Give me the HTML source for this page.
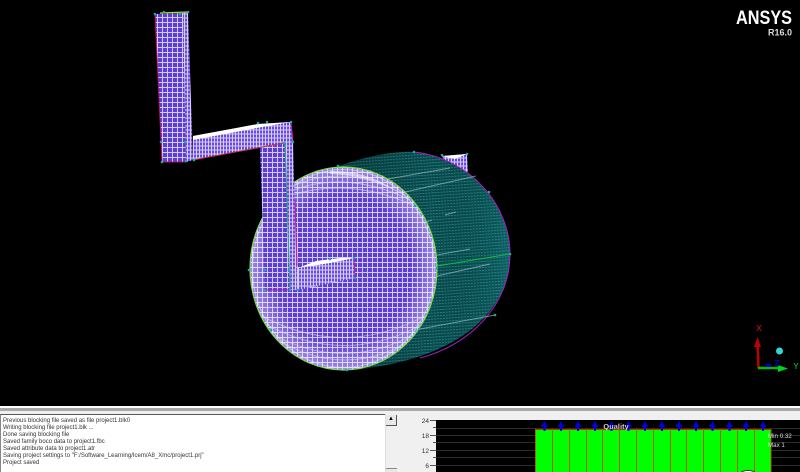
<!DOCTYPE html>
<html><head><meta charset="utf-8"><style>
html,body{margin:0;padding:0;background:#000;width:800px;height:472px;overflow:hidden}
#w{position:relative;width:800px;height:472px;overflow:hidden;font-family:"Liberation Sans",sans-serif}
.a{position:absolute}
</style></head><body><div id="w">
<svg class="a" style="left:0;top:0" width="800" height="406" viewBox="0 0 800 406">
<defs>
<pattern id="m" width="5" height="5" patternUnits="userSpaceOnUse"><rect width="5" height="5" fill="#5e3cd6"/><path d="M2.500 0V5M0 2.500H5" stroke="#d4ccf8" stroke-width="1"/></pattern>
<pattern id="n" width="3" height="4" patternUnits="userSpaceOnUse"><rect width="3" height="4" fill="#6a4adc"/><path d="M1.500 0V4M0 2H3" stroke="#d6cef8" stroke-width="1"/></pattern>
<pattern id="t" width="3" height="3" patternUnits="userSpaceOnUse" patternTransform="rotate(-4)"><rect width="3" height="3" fill="#0c4d50"/><rect width="2" height="1" fill="#1d8285"/><rect y="2" x="1" width="1" height="1" fill="#0a3436"/></pattern>
<linearGradient id="tg" x1="0" x2="1" y1="0" y2="0"><stop offset="0" stop-color="#000" stop-opacity=".25"/><stop offset=".55" stop-color="#000" stop-opacity="0"/><stop offset="1" stop-color="#2aa" stop-opacity=".22"/></linearGradient>
<radialGradient id="rim" cx=".5" cy=".5" r=".5"><stop offset=".72" stop-color="#fff" stop-opacity="0"/><stop offset=".93" stop-color="#fff" stop-opacity=".3"/><stop offset="1" stop-color="#fff" stop-opacity=".4"/></radialGradient>
<clipPath id="disc"><ellipse cx="343.500" cy="268.500" rx="93.500" ry="101.500"/></clipPath>
</defs>

<!-- back small tab -->
<polygon points="442,156 467,154 468,172 450,170" fill="url(#n)"/>
<polygon points="442,156 467,154 455,159" fill="#fff"/>

<!-- cylinder body -->
<path d="M336,167 C360,158 395,150 414,152 C470,158 510,205 510,254 C510,305 470,345 400,362 C385,366 360,370 345,370 Z" fill="url(#t)"/>
<path d="M336,167 C360,158 395,150 414,152 C470,158 510,205 510,254 C510,305 470,345 400,362 C385,366 360,370 345,370 Z" fill="url(#tg)"/>
<path d="M414,152 C470,158 510,205 510,254 C510,305 470,345 420,358" fill="none" stroke="#a020c0" stroke-width="1"/>
<g stroke="#a8cfcf" stroke-width="1" fill="none" opacity=".6">
<path d="M388,179 L450,168"/><path d="M405,192 L476,176"/><path d="M420,224 L432,220"/><path d="M445,215 L456,212"/>
<path d="M437,276 L490,264"/><path d="M420,329 L495,315"/><path d="M437,255 L470,249"/>
</g>
<path d="M437,266 L510,254" stroke="#0ec040" stroke-width="1"/>

<!-- front disc -->
<ellipse cx="343.500" cy="268.500" rx="93.500" ry="101.500" fill="url(#m)"/>
<ellipse cx="343.500" cy="268.500" rx="93.500" ry="101.500" fill="url(#rim)"/>
<!-- corner O-grid curves -->
<g clip-path="url(#disc)" fill="none" stroke="#e4def9" stroke-width="1" opacity=".55">
<path d="M285,190 Q340,160 405,195"/><path d="M280,196 Q340,166 410,200"/><path d="M275,202 Q340,172 415,206"/>
<path d="M270,335 Q345,385 420,335"/><path d="M265,330 Q345,378 425,328"/><path d="M262,322 Q345,370 430,320"/><path d="M258,314 Q345,362 432,312"/>
</g>
<ellipse cx="343.500" cy="268.500" rx="91" ry="99" fill="none" stroke="#e4def9" stroke-width="1" opacity=".6"/>
<ellipse cx="343.500" cy="268.500" rx="93.500" ry="101.500" fill="none" stroke="#7ee04a" stroke-width="1.200"/>
<path d="M330,171 Q365,170 395,190 Q368,176 330,174Z" fill="#fff" opacity=".55"/>

<!-- foot -->
<polygon points="298,268 354,258 355,278 298,290" fill="url(#n)"/>
<polygon points="298,268 316,261 340,258 354,258 330,263" fill="#fff"/>
<path d="M354,258 L355,278" stroke="#c02080" stroke-width="1"/>

<!-- down piece -->
<polygon points="260,148 283,143 293,142 295,290 265,290" fill="url(#m)"/>
<polygon points="285,143 293,142 297,290 290,290" fill="url(#n)"/>
<path d="M285,143 L290,290" stroke="#28b070" stroke-width="1"/>
<path d="M295,200 L297,266" stroke="#c02090" stroke-width="1"/>
<path d="M265,290 L290,290" stroke="#b02090" stroke-width="1"/>

<!-- left vertical -->
<polygon points="155,14 183,13 187,162 162,162" fill="url(#m)"/>
<polygon points="183,13 188,12 193,160 186,162" fill="url(#n)"/>
<path d="M155,14 L162,162" stroke="#c01060" stroke-width="1"/>
<path d="M162,162 L186,162" stroke="#c01060" stroke-width="1"/>
<path d="M160,13 L188,12" stroke="#a0e040" stroke-width="1.200"/>

<!-- horizontal arm -->
<polygon points="193,136 258,124 291,122 293,142 193,160" fill="url(#n)"/>
<polygon points="193,136 258,124 291,122 262,127 193,140" fill="#fff"/>
<path d="M193,160 L283,143" stroke="#c03040" stroke-width="1"/>
<path d="M291,122 L293,142" stroke="#c02090" stroke-width="1"/>

<!-- vertices -->
<g fill="#1fa8a8">
<circle cx="155" cy="14" r="1.300"/><circle cx="164" cy="12" r="1.300"/><circle cx="180" cy="14" r="1.300"/><circle cx="188" cy="12" r="1.300"/>
<circle cx="161" cy="142" r="1.300"/><circle cx="185" cy="142" r="1.300"/><circle cx="162" cy="162" r="1.300"/><circle cx="186" cy="161" r="1.300"/><circle cx="194" cy="160" r="1.300"/>
<circle cx="258" cy="123" r="1.300"/><circle cx="267" cy="122" r="1.300"/><circle cx="291" cy="122" r="1.300"/><circle cx="293" cy="142" r="1.300"/><circle cx="284" cy="143" r="1.300"/>
<circle cx="338" cy="166" r="1.300"/><circle cx="414" cy="152" r="1.300"/><circle cx="467" cy="154" r="1.300"/><circle cx="442" cy="155" r="1.300"/><circle cx="489" cy="192" r="1.300"/>
<circle cx="510" cy="254" r="1.300"/><circle cx="495" cy="315" r="1.300"/><circle cx="415" cy="206" r="1.300"/><circle cx="437" cy="268" r="1.300"/><circle cx="419" cy="329" r="1.300"/>
<circle cx="347" cy="370" r="1.300"/><circle cx="271" cy="330" r="1.300"/><circle cx="249" cy="270" r="1.300"/><circle cx="265" cy="290" r="1.300"/><circle cx="290" cy="290" r="1.300"/>
<circle cx="298" cy="290" r="1.300"/><circle cx="355" cy="278" r="1.300"/><circle cx="354" cy="258" r="1.300"/><circle cx="330" cy="259" r="1.300"/><circle cx="289" cy="270" r="1.300"/><circle cx="265" cy="270" r="1.300"/>
</g>

<!-- triad -->
<path d="M758.500 368 L757.500 342" stroke="#c00000" stroke-width="2.500"/>
<polygon points="754,347 761,347 757.500,337" fill="#c00000"/>
<path d="M758 368 H780" stroke="#00c000" stroke-width="2.500"/>
<polygon points="778,365 778,372 788,368.500" fill="#00d020"/>
<path d="M765 367 a3.500 3.500 0 0 1 7 0z" fill="#0000c0"/>
<circle cx="779.500" cy="351" r="3.500" fill="#30d8d0"/>
<text x="759" y="331" fill="#a01010" font-size="8" font-weight="bold" text-anchor="middle">X</text>
<text x="777" y="366" fill="#0000d0" font-size="8" font-weight="bold" text-anchor="middle">Z</text>
<text x="796" y="369" fill="#00a020" font-size="8" font-weight="bold" text-anchor="middle">Y</text>

<!-- logo -->
<text x="792" y="24" fill="#fff" font-size="19.500" font-weight="bold" text-anchor="end" textLength="56" lengthAdjust="spacingAndGlyphs">ANSYS</text>
<text x="792" y="35.500" fill="#ddd" font-size="9" font-weight="bold" text-anchor="end" textLength="24" lengthAdjust="spacingAndGlyphs">R16.0</text>
</svg>

<!-- bottom panel -->
<div class="a" style="left:0;top:406px;width:800px;height:66px;background:#f0f0f0"></div>
<div class="a" style="left:0;top:406px;width:800px;height:2px;background:#fff"></div>
<div class="a" style="left:0;top:408px;width:800px;height:3px;background:#a8a8a8"></div>
<div class="a" style="left:0;top:414px;width:385px;height:58px;background:#fff;border-top:1px solid #555;border-left:1px solid #888;box-sizing:border-box"></div>
<div class="a" style="left:385px;top:414px;width:12px;height:58px;background:#f0f0f0;border-left:1px solid #ddd;box-sizing:border-box"></div>
<div class="a" style="left:386px;top:415px;width:11px;height:11px;background:#e8e8e8;border-right:1px solid #555;border-bottom:1px solid #555;box-sizing:border-box;font-size:6px;line-height:9px;text-align:center;color:#000">▲</div>
<div class="a" style="left:386px;top:468px;width:11px;height:4px;background:#e8e8e8;border-top:1px solid #888;box-sizing:border-box"></div>
<div class="a" style="left:3px;top:418px;font-size:6px;line-height:7px;color:#333;white-space:pre">Previous blocking file saved as file project1.blk0
Writing blocking file project1.blk ...
Done saving blocking file
Saved family boco data to project1.fbc
Saved attribute data to project1.atr
Saving project settings to "F:/Software_Learning/Icem/A8_Xmc/project1.prj"
Project saved</div>

<!-- chart -->
<svg class="a" style="left:400px;top:406px" width="400" height="66" viewBox="400 406 400 66">
<rect x="436" y="420" width="364" height="52" fill="#000"/>
<g stroke="#2c2c2c" stroke-width="1"><path d="M436 428.500H800M436 435.500H800M436 442.500H800M436 450.500H800M436 457.500H800M436 465.500H800"/></g>
<rect x="535" y="429" width="236" height="43" fill="#00ff00"/>
<path d="M535 429.500H771" stroke="#c03000"/>
<path d="M535.500 429V472M552.500 429V472M569.500 429V472M586.500 429V472M602.500 429V472M619.500 429V472M636.500 429V472M653.500 429V472M670.500 429V472M686.500 429V472M703.500 429V472M720.500 429V472M737.500 429V472M754.500 429V472M771 429V472" stroke="#b06000" stroke-width="1"/>
<g fill="#0000e0">
<path d="M543.500 427V431H545.500V427H548L544.500 421L541 427Z"/>
<path d="M560 427V431H562V427H564.500L561 421L557.500 427Z"/>
<path d="M577 427V431H579V427H581.500L578 421L574.500 427Z"/>
<path d="M594 427V431H596V427H598.500L595 421L591.500 427Z"/>
<path d="M610.500 427V431H612.500V427H615L611.500 421L608 427Z"/>
<path d="M627.500 427V431H629.500V427H632L628.500 421L625 427Z"/>
<path d="M644 427V431H646V427H648.500L645 421L641.500 427Z"/>
<path d="M661 427V431H663V427H665.500L662 421L658.500 427Z"/>
<path d="M678 427V431H680V427H682.500L679 421L675.500 427Z"/>
<path d="M695 427V431H697V427H699.500L696 421L692.500 427Z"/>
<path d="M711.500 427V431H713.500V427H716L712.500 421L709 427Z"/>
<path d="M728.500 427V431H730.500V427H733L729.500 421L726 427Z"/>
<path d="M745 427V431H747V427H749.500L746 421L742.500 427Z"/>
<path d="M762 427V431H764V427H766.500L763 421L759.500 427Z"/>
</g>
<text x="616" y="429" fill="#fff" font-size="7.500" font-weight="bold" text-anchor="middle" stroke="#000" stroke-width=".2">Quality</text>
<text x="768" y="438" fill="#ddd" font-size="6.200">Min 0.32</text>
<text x="768" y="447" fill="#ddd" font-size="6.200">Max 1</text>
<g fill="#333" font-size="6.500" text-anchor="end"><text x="429" y="423">24</text><text x="429" y="438">18</text><text x="429" y="453">12</text><text x="429" y="468">6</text></g>
<path d="M430 420.500H436M433 427.500H436M430 435.500H436M433 442.500H436M430 450.500H436M433 457.500H436M430 465.500H436" stroke="#555" stroke-width="1"/>
<ellipse cx="748" cy="473" rx="7" ry="2.500" fill="#fff" stroke="#333"/>
</svg>
</div></body></html>
